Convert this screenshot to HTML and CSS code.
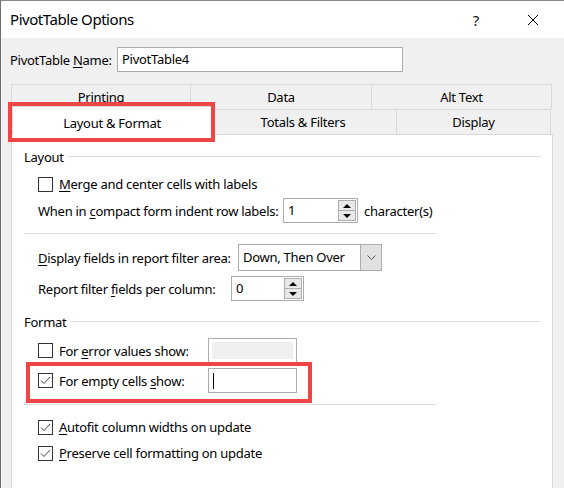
FILE: index.html
```html
<!DOCTYPE html>
<html>
<head>
<meta charset="utf-8">
<link rel="stylesheet" href="styles.css">
</head>
<body>
<div class="window">
  <div class="titlebar">
    <span class="title">PivotTable Options</span>
    <span class="help">?</span>
    <svg class="close" width="12" height="12" viewBox="0 0 12 12"><path d="M1 1 L11 11 M11 1 L1 11" stroke="#000" stroke-width="1" fill="none"/></svg>
  </div>
  <div class="client">
    <div class="name-row">
      <span class="name-label">PivotTable <u>N</u>ame:</span>
      <div class="textbox name-box">PivotTable4</div>
    </div>
    <div class="tabs">
      <div class="tabrow">
        <div class="tab t-print">Printing</div>
        <div class="tab t-data">Data</div>
        <div class="tab t-alt">Alt Text</div>
      </div>
      <div class="tabrow">
        <div class="tab t-layout selected">Layout &amp; Format</div>
        <div class="tab t-totals">Totals &amp; Filters</div>
        <div class="tab t-display">Display</div>
      </div>
    </div>
    <div class="panel">
      <div class="group-head head-layout"><span>Layout</span><div class="line"></div></div>
      <div class="row r-merge">
        <span class="check"></span><span class="clabel"><u>M</u>erge and center cells with labels</span>
      </div>
      <div class="row r-compact">
        <span class="flabel w-compact">When in <u>c</u>ompact form indent row labels:</span>
        <div class="spin s-compact"><span class="spin-val">1</span><span class="spin-btns"><span class="sb up"></span><span class="sb down"></span></span></div>
        <span class="after">character(s)</span>
      </div>
      <div class="sep sep1"></div>
      <div class="row r-display">
        <span class="flabel w-display"><u>D</u>isplay fields in report filter area:</span>
        <div class="combo"><span class="combo-val">Down, Then Over</span><span class="combo-btn"><svg width="9" height="5" viewBox="0 0 9 5"><path d="M0.5 0.5 L4.5 4.5 L8.5 0.5" stroke="#555" stroke-width="1" fill="none"/></svg></span></div>
      </div>
      <div class="row r-report">
        <span class="flabel w-report">Report filter <u>f</u>ields per column:</span>
        <div class="spin s-report"><span class="spin-val">0</span><span class="spin-btns"><span class="sb up"></span><span class="sb down"></span></span></div>
      </div>
      <div class="group-head head-format"><span>Format</span><div class="line"></div></div>
      <div class="row r-error">
        <span class="pair"><span class="check"></span><span class="clabel">For <u>e</u>rror values show:</span></span>
        <div class="textbox disabled-box"><div class="fill"></div></div>
      </div>
      <div class="row r-empty">
        <span class="pair"><span class="check checked"><svg width="13" height="13" viewBox="0 0 13 13"><path d="M2 6.5 L5 9.5 L11 3" stroke="#444" stroke-width="1" fill="none"/></svg></span><span class="clabel">For empty cells <u>s</u>how:</span></span>
        <div class="textbox empty-box"><span class="caret"></span></div>
      </div>
      <div class="sep sep2"></div>
      <div class="row r-autofit">
        <span class="check checked"><svg width="13" height="13" viewBox="0 0 13 13"><path d="M2 6.5 L5 9.5 L11 3" stroke="#444" stroke-width="1" fill="none"/></svg></span><span class="clabel"><u>A</u>utofit column widths on update</span>
      </div>
      <div class="row r-preserve">
        <span class="check checked"><svg width="13" height="13" viewBox="0 0 13 13"><path d="M2 6.5 L5 9.5 L11 3" stroke="#444" stroke-width="1" fill="none"/></svg></span><span class="clabel"><u>P</u>reserve cell formatting on update</span>
      </div>
    </div>
  </div>
  <div class="callout callout-tab"></div>
  <div class="callout callout-empty"></div>
</div>
</body>
</html>
```

FILE: styles.css
```css
* { box-sizing: border-box; }
html, body { margin: 0; padding: 0; }
body {
  width: 564px;
  height: 488px;
  overflow: hidden;
  font-family: "Noto Sans", "Open Sans", sans-serif;
  font-size: 13px;
  letter-spacing: -0.27px;
  color: #000;
  background: #f0f0f0;
}
u { text-decoration: underline; text-underline-offset: 2px; }
.window {
  position: relative;
  width: 564px;
  height: 488px;
  border-left: 1px solid #6e6e6e;
  border-top: 1px solid #8a8a8a;
  background: #f0f0f0;
  overflow: hidden;
}
.titlebar {
  height: 37px;
  background: #fff;
  display: flex;
  align-items: center;
  padding-left: 9px;
}
.title { font-size: 15px; flex: 1; padding-bottom: 1px; letter-spacing: -0.45px; }
.help { font-size: 15px; margin-right: 48px; color: #111; }
.close { margin-right: 25px; }
.client { padding: 9px 0 0 0; }
.name-row { display: flex; align-items: center; height: 25px; padding-left: 9px; }
.name-label { width: 107px; }
.textbox {
  border: 1px solid #acacac;
  background: #fff;
  height: 25px;
}
.name-box { width: 286px; padding: 2px 0 0 4px; }
.tabs { margin-top: 12px; margin-left: 10px; width: 541px; }
.tabrow { display: flex; height: 25px; }
.tab {
  border: 1px solid #d9d9d9;
  border-bottom: none;
  margin-left: -1px;
  display: flex;
  align-items: center;
  justify-content: center;
  background: #f0f0f0;
  padding-bottom: 1px;
}
.tab:first-child { margin-left: 0; }
.t-print { width: 180px; }
.t-data { width: 182px; }
.t-alt { width: 181px; }
.t-layout { width: 200px; }
.t-totals { width: 188px; }
.t-display { width: 155px; }
.tab.selected {
  position: relative;
  z-index: 2;
  background: #fff;
  height: 29px;
  margin-top: -3px;
  margin-left: 1px;
  margin-right: -2px;
  padding-top: 4px;
}
.panel {
  margin-left: 10px;
  width: 542px;
  height: 360px;
  background: #fff;
  border: 1px solid #d9d9d9;
  padding: 0 11px 0 12px;
  display: flex;
  flex-direction: column;
}
.group-head { display: flex; align-items: center; height: 20px; }
.group-head .line { flex: 1; border-top: 1px solid #dcdcdc; margin-left: 4px; margin-top: -2px; }
.head-layout { margin-top: 12px; }
.head-format { margin-top: 11px; }
.row { display: flex; align-items: center; padding-left: 14px; white-space: nowrap; }
.r-merge { margin-top: 7px; height: 20px; }
.r-compact { margin-top: 4px; height: 25px; }
.r-display { margin-top: 10px; height: 27px; }
.r-report { margin-top: 5px; height: 25px; }
.r-error { margin-top: 6px; height: 25px; }
.r-empty { margin-top: 5px; height: 25px; }
.r-autofit { margin-top: 12px; height: 20px; }
.r-preserve { margin-top: 6px; height: 20px; }
.sep { width: 412px; border-top: 1px solid #dcdcdc; height: 1px; }
.sep1 { margin-top: 10px; }
.sep2 { margin-top: 11px; }
.check {
  width: 15px; height: 15px;
  border: 1px solid #333;
  background: #fff;
  display: inline-flex;
  align-items: center;
  justify-content: center;
  margin-right: 6px;
  flex: none;
}
.check svg { display: block; }
.flabel { flex: none; }
.w-compact { width: 245px; }
.w-display { width: 200px; }
.w-report { width: 193px; }
.pair { display: flex; align-items: center; width: 170px; flex: none; }
.spin {
  display: flex;
  border: 1px solid #acacac;
  height: 25px;
  background: #fff;
  flex: none;
}
.s-compact { width: 75px; }
.s-report { width: 73px; }
.spin-val { flex: 1; padding: 2px 0 0 4px; }
.spin-btns { display: flex; flex-direction: column; width: 19px; padding: 1px 1px 1px 0; }
.sb {
  flex: 1;
  background: #e8e8e8;
  border: 1px solid #adadad;
  display: flex;
  align-items: center;
  justify-content: center;
}
.sb + .sb { border-top: none; }
.sb.up::before {
  content: "";
  border-left: 4px solid transparent;
  border-right: 4px solid transparent;
  border-bottom: 4px solid #000;
}
.sb.down::before {
  content: "";
  border-left: 4px solid transparent;
  border-right: 4px solid transparent;
  border-top: 4px solid #000;
}
.after { margin-left: 6px; }
.combo {
  display: flex;
  width: 144px;
  height: 27px;
  border: 1px solid #acacac;
  background: #fff;
  flex: none;
}
.combo-val { flex: 1; padding: 3px 0 0 4px; }
.combo-btn {
  width: 21px;
  background: #e1e1e1;
  border-left: 1px solid #acacac;
  display: flex;
  align-items: center;
  justify-content: center;
}
.disabled-box { width: 89px; padding: 3px; flex: none; }
.disabled-box .fill { width: 100%; height: 100%; background: #f0f0f0; }
.empty-box { width: 89px; display: flex; align-items: center; padding-left: 4px; flex: none; }
.caret { width: 1px; height: 16px; background: #000; }
.callout {
  position: absolute;
  border: 4px solid #f04545;
  z-index: 5;
}
.callout-tab { left: 7px; top: 101px; width: 207px; height: 40px; }
.callout-empty { left: 25px; top: 361px; width: 286px; height: 41px; }
```
